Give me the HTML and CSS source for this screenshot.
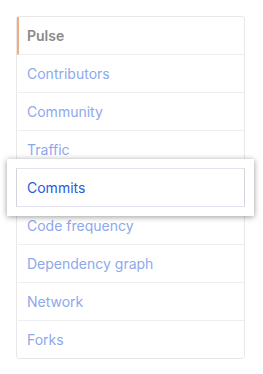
FILE: index.html
```html
<!DOCTYPE html>
<html lang="en">
<head>
    <meta charset="UTF-8">
    <meta name="viewport" content="width=device-width, initial-scale=1.0">
    <title>Insights</title>
    <link rel="stylesheet" href="styles.css">
</head>
<body>
    <nav class="menu">
        <a href="#" class="menu-item selected">Pulse</a>
        <a href="#" class="menu-item">Contributors</a>
        <a href="#" class="menu-item">Community</a>
        <a href="#" class="menu-item">Traffic</a>
        <a href="#" class="menu-item focus">Commits</a>
        <a href="#" class="menu-item">Code frequency</a>
        <a href="#" class="menu-item">Dependency graph</a>
        <a href="#" class="menu-item">Network</a>
        <a href="#" class="menu-item">Forks</a>
    </nav>
</body>
</html>
```

FILE: styles.css
```css
body {
    margin: 0;
    background-color: #fff;
    font-family: 'Inter', 'Liberation Sans', sans-serif;
}
.menu {
    display: flex;
    flex-direction: column;
    width: 227px;
    margin: 16px 0 0 16px;
    border: 1px solid #e8e8e8;
    border-radius: 3px;
}
.menu-item {
    display: flex;
    align-items: center;
    height: 37px;
    padding-left: 8px;
    border-left: 2px solid transparent;
    border-bottom: 1px solid #eeeeee;
    font-size: 14px;
    color: #8ea8ec;
    text-decoration: none;
}
.menu-item:last-child {
    border-bottom: none;
}
.menu-item.selected {
    border-left-color: #f4ab80;
    color: #8a8a8a;
    font-weight: 600;
}

/* highlighted row sits on a white card above the faded list */
.menu-item.focus {
    position: relative;
    z-index: 1;
    color: #1f5bdb;
}
.menu-item.focus::before,
.menu-item.focus::after {
    content: "";
    position: absolute;
    z-index: -1;
}
.menu-item.focus::before {
    top: -10px;
    bottom: -10px;
    left: -12px;
    right: -10px;
    background: #fff;
    box-shadow: 0 1px 6px rgba(0, 0, 0, 0.4);
}
.menu-item.focus::after {
    top: -1px;
    bottom: -1px;
    left: -3px;
    right: -1px;
    border-top: 1px solid #e2e2ec;
    border-bottom: 1px solid #e2e2ec;
    border-left: 1px solid #d4d4dc;
    border-right: 1px solid #d4d4dc;
}
```
